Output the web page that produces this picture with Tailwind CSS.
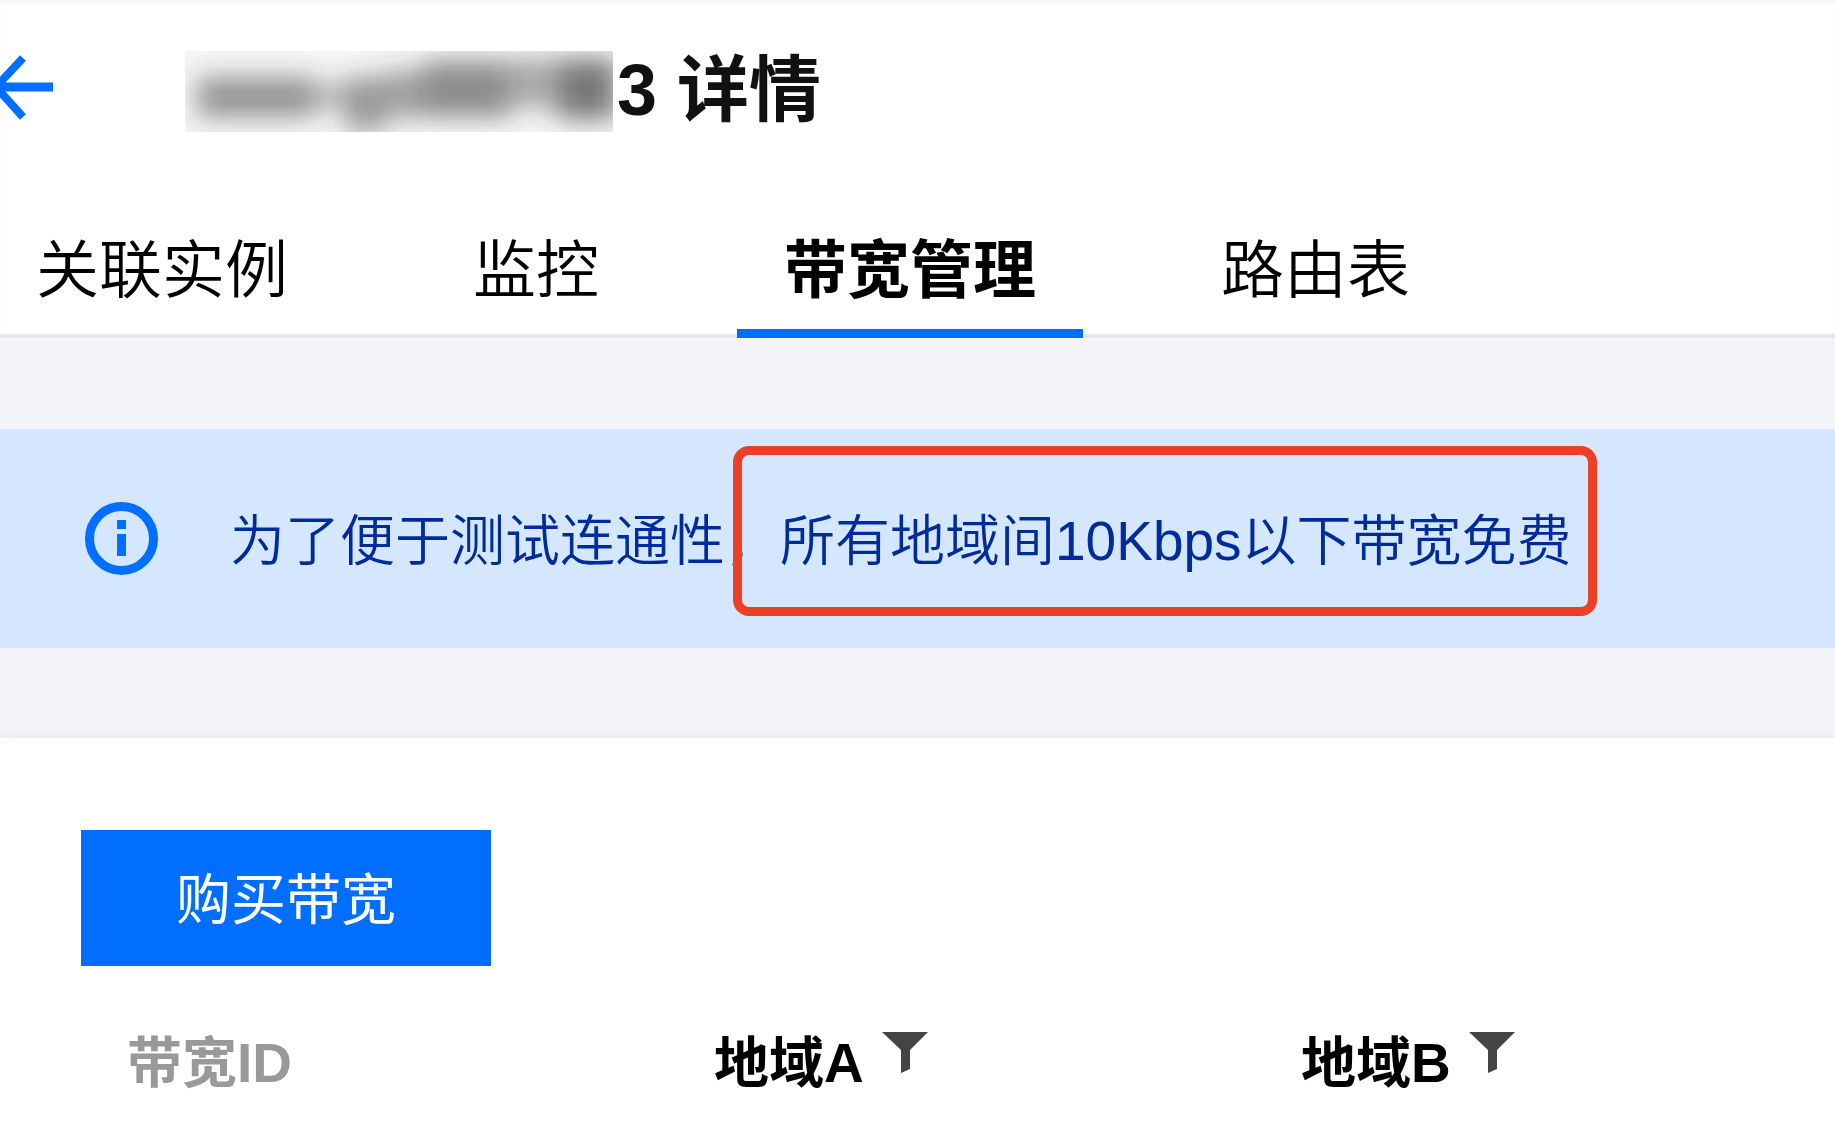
<!DOCTYPE html>
<html lang="zh-CN">
<head>
    <meta charset="UTF-8">
    <meta name="viewport" content="width=device-width, initial-scale=1.0">
    <title>带宽管理</title>
    <script src="https://cdn.jsdelivr.net/npm/@tailwindcss/browser@4"></script>
</head>
<body class="min-h-screen overflow-x-hidden bg-[#f2f4f8] font-['Liberation_Sans','Noto_Sans_CJK_SC',sans-serif] text-black">
    <header class="border-b-4 border-[#e5e7ec] bg-white shadow-[inset_0_4px_4px_-2px_#f0f0f0]">
        <!-- Title -->
        <div class="flex items-center pt-[51px]">
            <a href="#" aria-label="返回" class="w-[185px] shrink-0 pb-2">
                <svg class="block h-[66px] w-[54px]" viewBox="0 0 54 66" fill="none" stroke="#006eff" stroke-width="9" aria-hidden="true">
                    <path d="M53 32H0"/>
                    <path d="M23 3L-4 32L23 62" stroke-width="8"/>
                </svg>
            </a>
            <!-- masked instance id -->
            <div class="h-[81px] w-[428px] shrink-0 overflow-hidden bg-[#f6f6f6]">
                <svg class="h-full w-full" viewBox="0 0 428 81" aria-hidden="true">
                    <defs>
                        <filter id="mask" x="-20%" y="-60%" width="140%" height="220%"><feGaussianBlur stdDeviation="13"/></filter>
                    </defs>
                    <g filter="url(#mask)" fill="#333">
                        <rect x="12" y="26" width="118" height="40" opacity=".5"/>
                        <rect x="130" y="34" width="32" height="22" opacity=".35"/>
                        <rect x="160" y="26" width="40" height="54" opacity=".48"/>
                        <rect x="200" y="20" width="38" height="46" opacity=".45"/>
                        <rect x="238" y="10" width="88" height="56" opacity=".55"/>
                        <rect x="328" y="8" width="42" height="48" opacity=".4"/>
                        <rect x="372" y="8" width="60" height="60" opacity=".66"/>
                    </g>
                </svg>
            </div>
            <h1 class="whitespace-nowrap pb-1 pl-1 text-[72px] font-bold leading-[72px] text-[#111]">3 详情</h1>
        </div>

        <!-- Tabs -->
        <nav class="-mb-1 -ml-[11px] flex gap-[91px] whitespace-nowrap pt-[62px] text-[63px] leading-[80px]">
            <a href="#" class="border-b-9 border-transparent px-[47px] pt-9 pb-[19px] font-[350]">关联实例</a>
            <a href="#" class="border-b-9 border-transparent px-[47px] pt-9 pb-[19px] font-[350]">监控</a>
            <a href="#" aria-current="page" class="border-b-9 border-[#006eff] px-[47px] pt-9 pb-[19px] font-bold">带宽管理</a>
            <a href="#" class="border-b-9 border-transparent px-[47px] pt-9 pb-[19px] font-[350]">路由表</a>
        </nav>
    </header>

    <!-- Notice -->
    <div class="mt-[91px] flex h-[219px] items-center bg-[#d5e7ff] pl-[85px] text-[55px] leading-[72px] text-[#002b9a]">
        <svg class="mr-[72px] h-[73px] w-[73px] shrink-0" viewBox="0 0 73 73" aria-hidden="true">
            <circle cx="36.5" cy="36.5" r="32" fill="none" stroke="#006eff" stroke-width="9"/>
            <path fill="#006eff" d="M32 18h9v9h-9zM32 32h9v22h-9z"/>
        </svg>
        <p class="whitespace-nowrap pt-1 font-[350]">为了便于测试连通性，<span class="relative">所有地域间10Kbps以下带宽免费<span class="absolute -top-16 -right-[25px] -bottom-11 -left-[47px] rounded-2xl border-9 border-[#eb3f26]"></span></span></p>
    </div>

    <!-- Bandwidth list -->
    <main class="mt-[90px] bg-white pt-[92px] pb-12 shadow-[0_-2px_4px_#e8eaee]">
        <button type="button" class="ml-[81px] h-[136px] w-[410px] bg-[#006eff] pt-1 text-[55px] text-white">购买带宽</button>
        <table class="mt-[56px] w-full table-fixed text-left text-[55px] leading-[82px]">
            <thead>
                <tr class="whitespace-nowrap">
                    <th class="w-[714px] p-0 pl-[127px] text-[#999]">带宽ID</th>
                    <th class="w-[587px] p-0">
                        <div class="flex gap-[18px]">地域A
                            <button type="button" aria-label="筛选地域A" class="h-[60px]">
                                <svg class="h-[41px] w-[46px]" viewBox="0 0 46 41" aria-hidden="true"><path fill="#444" d="M0 0H46L28 18V37L19 41V18Z"/></svg>
                            </button>
                        </div>
                    </th>
                    <th class="p-0">
                        <div class="flex gap-[18px]">地域B
                            <button type="button" aria-label="筛选地域B" class="h-[60px]">
                                <svg class="h-[41px] w-[46px]" viewBox="0 0 46 41" aria-hidden="true"><path fill="#444" d="M0 0H46L28 18V37L19 41V18Z"/></svg>
                            </button>
                        </div>
                    </th>
                </tr>
            </thead>
        </table>
    </main>
</body>
</html>
